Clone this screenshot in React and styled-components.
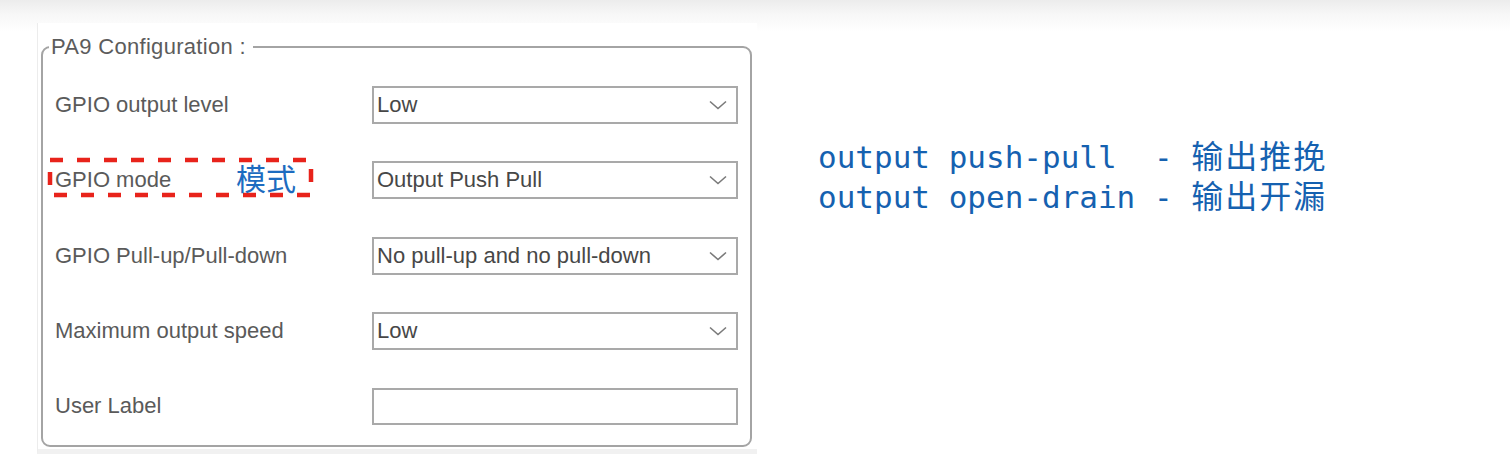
import styled, { createGlobalStyle } from 'styled-components';

const GlobalStyle = createGlobalStyle`
	html, body {
		margin: 0;
		padding: 0;
	}
	body {
		width: 1510px;
		height: 454px;
		overflow: hidden;
		background: linear-gradient(#ececec 0, #f7f7f7 14px, #ffffff 32px);
		font-family: 'Liberation Sans', Arial, sans-serif;
	}
`;

const Page = styled.div`
	display: flex;
	align-items: flex-start;
	padding-left: 37px;
`;

const Area = styled.div`
	width: 711px;
	margin-top: 23px;
	padding: 11px 5px 2px 3px;
	border-left: 1px solid #ececec;
	border-bottom: 6px solid #f1f1f1;
	background: #fff;
`;

const Fieldset = styled.fieldset`
	margin: 0;
	padding: 26px 11px 20px 12px;
	border: 2px solid #a4a4a4;
	border-radius: 9px;
	min-width: 0;
	display: flex;
	flex-direction: column;
	gap: 37.3px;
`;

const Legend = styled.legend`
	margin-left: -6px;
	padding: 0 7px 0 2px;
	font-size: 22px;
	line-height: 26px;
	letter-spacing: 0.3px;
	color: #5c5c5c;
`;

const Row = styled.div`
	position: relative;
	display: grid;
	grid-template-columns: 317px 366px;
	align-items: center;
	height: 38px;
`;

const Label = styled.span`
	font-size: 22px;
	color: #5a5a5a;
	white-space: nowrap;
`;

const Select = styled.div`
	box-sizing: border-box;
	height: 38px;
	display: flex;
	align-items: center;
	justify-content: space-between;
	padding: 0 9px 0 3px;
	border: 2px solid #a9a9a9;
	background: #fff;
	font-size: 22px;
	color: #474747;
`;

const TextInput = styled.div`
	box-sizing: border-box;
	height: 37px;
	border: 2px solid #a9a9a9;
	background: #fff;
`;

const Mark = styled.svg`
	position: absolute;
	left: -9px;
	top: -3px;
	overflow: visible;
`;

const MarkNote = styled.span`
	position: absolute;
	left: 181px;
	top: -2px;
	font-family: 'Noto Sans CJK SC', sans-serif;
	font-size: 30px;
	line-height: 36px;
	color: #1d6cc0;
`;

const Notes = styled.div`
	margin-left: 61px;
	margin-top: 137px;
	font-family: 'DejaVu Sans Mono', 'Noto Sans CJK SC', monospace;
	font-size: 31px;
	color: #1561b0;
	white-space: pre;
`;

const NoteLine = styled.div`
	height: 40px;
	line-height: 40px;
`;

const Zh = styled.span`
	font-family: 'Noto Sans CJK SC', sans-serif;
	font-size: 32px;
	line-height: 1;
	letter-spacing: 2px;
`;

const Chevron = () => (
	<svg width="18" height="10" viewBox="0 0 18 10">
		<path d="M1 1.5 L9 8.5 L17 1.5" fill="none" stroke="#7a7a7a" strokeWidth="1.6" />
	</svg>
);

const rows = [
	{ label: 'GPIO output level', value: 'Low' },
	{ label: 'GPIO mode', value: 'Output Push Pull', marked: true },
	{ label: 'GPIO Pull-up/Pull-down', value: 'No pull-up and no pull-down' },
	{ label: 'Maximum output speed', value: 'Low' },
];

const App = () => (
	<>
		<GlobalStyle />
		<Page>
			<Area>
				<Fieldset>
					<Legend>PA9 Configuration :</Legend>
					{rows.map(row => (
						<Row key={row.label}>
							<Label>{row.label}</Label>
							<Select>
								<span>{row.value}</span>
								<Chevron />
							</Select>
							{row.marked && (
								<>
									<Mark width="268" height="39" viewBox="0 0 268 39">
										<rect
											x="4"
											y="2"
											width="261"
											height="35"
											fill="none"
											stroke="#e8231b"
											strokeWidth="4.5"
											strokeDasharray="13 14"
										/>
									</Mark>
									<MarkNote>模式</MarkNote>
								</>
							)}
						</Row>
					))}
					<Row>
						<Label>User Label</Label>
						<TextInput />
					</Row>
				</Fieldset>
			</Area>
			<Notes>
				<NoteLine>
					{'output push-pull  - '}
					<Zh>输出推挽</Zh>
				</NoteLine>
				<NoteLine>
					{'output open-drain - '}
					<Zh>输出开漏</Zh>
				</NoteLine>
			</Notes>
		</Page>
	</>
);

export default App;
